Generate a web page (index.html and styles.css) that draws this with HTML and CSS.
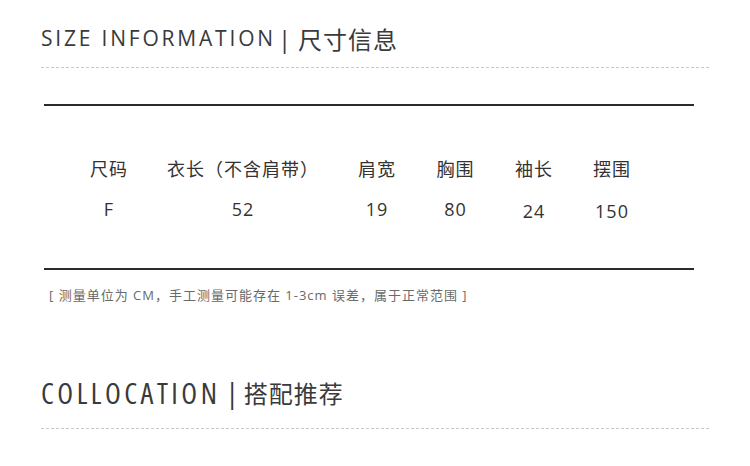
FILE: index.html
```html
<!DOCTYPE html>
<html lang="zh">
<head>
<meta charset="utf-8">
<link rel="stylesheet" href="styles.css">
</head>
<body>
<div class="page">
  <section class="section">
    <h2 class="title"><span class="en">SIZE INFORMATION</span><span class="bar">|</span><span class="cn">尺寸信息</span></h2>
    <div class="dash"></div>
  </section>

  <div class="size-table">
    <div class="row head">
      <div class="cell">尺码</div>
      <div class="cell">衣长（不含肩带）</div>
      <div class="cell">肩宽</div>
      <div class="cell">胸围</div>
      <div class="cell">袖长</div>
      <div class="cell">摆围</div>
    </div>
    <div class="row values">
      <div class="cell">F</div>
      <div class="cell">52</div>
      <div class="cell">19</div>
      <div class="cell">80</div>
      <div class="cell low">24</div>
      <div class="cell low">150</div>
    </div>
  </div>

  <p class="note">[ 测量单位为 CM，手工测量可能存在 1-3cm 误差，属于正常范围 ]</p>

  <section class="section second">
    <h2 class="title narrow"><span class="en">COLLOCATION</span><span class="bar">|</span><span class="cn">搭配推荐</span></h2>
    <div class="dash"></div>
  </section>
</div>
</body>
</html>
```

FILE: styles.css
```css
* { box-sizing: border-box; }
html, body { margin: 0; padding: 0; background: #fff; }
body {
  width: 750px;
  height: 466px;
  overflow: hidden;
  font-family: "Open Sans", "Noto Sans CJK SC", sans-serif;
  color: #444;
}
.page { padding: 0 40px 0 41px; }

.section { padding-top: 22px; }
.title {
  display: flex;
  align-items: center;
  margin: 0;
  height: 32px;
  font-weight: 500;
  color: #3a3a3a;
  white-space: nowrap;
}
.title .en { font-size: 21px; letter-spacing: 2.8px; }
.title .bar { font-size: 24px; margin-left: 2px; margin-right: 7px; }
.title .cn {
  font-family: "Noto Sans CJK SC", sans-serif;
  font-size: 24px;
  font-weight: 400;
  letter-spacing: 1px;
}
.dash {
  margin-top: 13px;
  height: 1px;
  background: repeating-linear-gradient(to right, #c8c8c8 0 3px, transparent 3px 5px);
}

.size-table {
  margin: 36px 16px 0 3px;
  border-top: 2px solid #2b2b2b;
  border-bottom: 2px solid #2b2b2b;
  padding: 50px 0 46px 26px;
}
.row {
  display: grid;
  grid-template-columns: 78px 190px 78px 79px 78px 78px;
  justify-items: center;
  color: #333;
}
.head { font-size: 18px; line-height: 26px; letter-spacing: 1px; }
.values { margin-top: 14px; font-size: 18px; line-height: 26px; letter-spacing: 1px; }
.values .low { position: relative; top: 2px; }

.note {
  margin: 17px 0 0 8px;
  font-size: 13px;
  line-height: 16px;
  color: #6a6a6a;
  letter-spacing: 1px;
}

.second { padding-top: 73px; }
.narrow .en {
  font-size: 29px;
  font-stretch: 75%;
  letter-spacing: 3.5px;
}
.narrow .bar { font-size: 28px; margin-left: 4px; margin-right: 4px; }
.narrow .cn { font-size: 24px; letter-spacing: 1px; }
.second .dash { margin-top: 20px; }
```
